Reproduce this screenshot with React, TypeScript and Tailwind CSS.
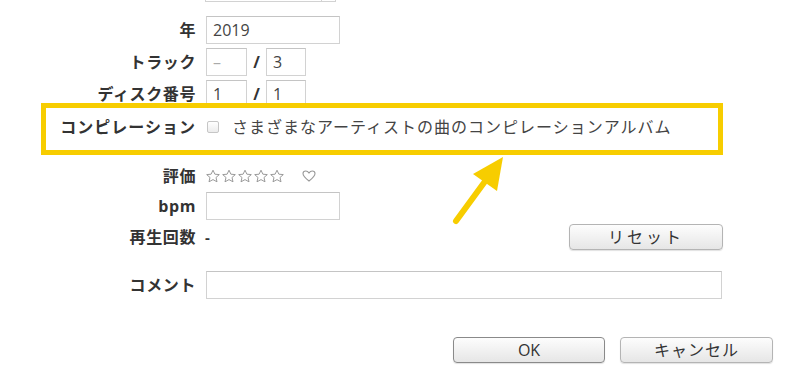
import React from 'react';

const font = { fontFamily: '"Open Sans", "Noto Sans CJK JP", sans-serif' };

function Label({ children }: { children: React.ReactNode }) {
  return (
    <div className="w-[196px] shrink-0 text-right text-[16px] font-bold tracking-[0.6px] text-[#333] leading-none whitespace-nowrap">
      {children}
    </div>
  );
}

function Box({ w, children, muted }: { w: string; children?: React.ReactNode; muted?: boolean }) {
  return (
    <div
      className={`${w} h-full border border-[#d2d2d2] border-t-[#c4c4c4] bg-white flex items-center px-[6px] text-[16px] ${
        muted ? 'text-[#aaa]' : 'text-[#444]'
      }`}
    >
      {children}
    </div>
  );
}

function Star() {
  return (
    <svg width="16" height="14" viewBox="0 0 16 14" className="shrink-0">
      <path
        d="M8 1.2 L9.9 5.2 L14.3 5.6 L11 8.5 L12 12.8 L8 10.6 L4 12.8 L5 8.5 L1.7 5.6 L6.1 5.2 Z"
        fill="none"
        stroke="#9a9a9a"
        strokeWidth="1"
        strokeLinejoin="round"
      />
    </svg>
  );
}

function Btn({ children, primary, w }: { children: React.ReactNode; primary?: boolean; w: string }) {
  return (
    <div
      className={`${w} h-[26px] rounded-[4px] border ${
        primary ? 'border-[#8a8a8a]' : 'border-[#b4b4b4]'
      } bg-gradient-to-b from-[#fdfdfd] to-[#e6e6e6] shadow-[0_1px_1px_rgba(0,0,0,0.12)] flex items-center justify-center text-[16px] text-[#333]`}
    >
      {children}
    </div>
  );
}

export default function App() {
  return (
    <div className="relative w-[800px] h-[389px] bg-white overflow-hidden" style={font}>
      <div className="flex flex-col">
        {/* cut-off field above */}
        <div className="h-[2px] flex">
          <div className="ml-[205px] w-[117px] h-full border-x border-b border-[#d2d2d2]" />
          <div className="w-[14px] h-full border-r border-b border-[#d2d2d2]" />
        </div>

        <div className="mt-[14px] h-[28px] flex items-center">
          <Label>年</Label>
          <div className="ml-[10px] h-full">
            <Box w="w-[134px]">2019</Box>
          </div>
        </div>

        <div className="mt-[4px] h-[28px] flex items-center">
          <Label>トラック</Label>
          <div className="ml-[10px] h-full flex items-center">
            <Box w="w-[41px]" muted>–</Box>
            <span className="w-[19px] text-center text-[16px] font-bold text-[#333]">/</span>
            <Box w="w-[40px]">3</Box>
          </div>
        </div>

        <div className="mt-[4px] h-[28px] flex items-center">
          <Label>ディスク番号</Label>
          <div className="ml-[10px] h-full flex items-center">
            <Box w="w-[41px]">1</Box>
            <span className="w-[19px] text-center text-[16px] font-bold text-[#333]">/</span>
            <Box w="w-[40px]">1</Box>
          </div>
        </div>

        <div className="mt-[9px] h-[20px] flex items-center">
          <div className="w-[196px] shrink-0 text-right text-[16px] font-bold tracking-[1px] text-[#333] leading-none whitespace-nowrap">
            コンピレーション
          </div>
          <div className="ml-[11px] w-[12px] h-[12px] border border-[#c6c6c6] rounded-[2px] bg-gradient-to-b from-white to-[#ececec]" />
          <span className="ml-[13px] text-[16px] tracking-[1px] text-[#444] leading-none whitespace-nowrap">
            さまざまなアーティストの曲のコンピレーションアルバム
          </span>
        </div>

        <div className="mt-[31px] h-[16px] flex items-center">
          <Label>評価</Label>
          <div className="ml-[9px] flex items-center">
            <Star />
            <Star />
            <Star />
            <Star />
            <Star />
            <svg width="14" height="12" viewBox="0 0 14 12" className="ml-[17px]">
              <path
                d="M7 11 C3 8 1 6 1 3.6 C1 2 2.3 1 3.8 1 C5.2 1 6.3 1.9 7 3 C7.7 1.9 8.8 1 10.2 1 C11.7 1 13 2 13 3.6 C13 6 11 8 7 11 Z"
                fill="none"
                stroke="#999"
                strokeWidth="1.1"
              />
            </svg>
          </div>
        </div>

        <div className="mt-[8px] h-[28px] flex items-center">
          <Label>bpm</Label>
          <div className="ml-[10px] h-full">
            <Box w="w-[134px]" />
          </div>
        </div>

        <div className="mt-[4px] h-[26px] flex items-center">
          <Label>再生回数</Label>
          <span className="ml-[9px] text-[15px] font-bold text-[#333]">-</span>
          <div className="ml-auto mr-[77px]">
            <Btn w="w-[154px]">
              <span className="tracking-[3px]">リセット</span>
            </Btn>
          </div>
        </div>

        <div className="mt-[21px] h-[28px] flex items-center">
          <Label>コメント</Label>
          <div className="ml-[10px] h-full">
            <Box w="w-[516px]" />
          </div>
        </div>

        <div className="mt-[38px] flex gap-[15px] pl-[453px]">
          <Btn w="w-[152px]" primary>
            OK
          </Btn>
          <Btn w="w-[153px]">
            <span className="tracking-[1px]">キャンセル</span>
          </Btn>
        </div>
      </div>

      {/* annotation overlay */}
      <div className="absolute left-[41px] top-[103px] w-[682px] h-[52px] border-[5px] border-[#f7cd00]" />
      <svg className="absolute left-0 top-0" width="800" height="389" viewBox="0 0 800 389">
        <line x1="456" y1="221" x2="486" y2="180" stroke="#f7cd00" strokeWidth="6" strokeLinecap="round" />
        <polygon points="503,157 473,174 497,191" fill="#f7cd00" />
      </svg>
    </div>
  );
}
